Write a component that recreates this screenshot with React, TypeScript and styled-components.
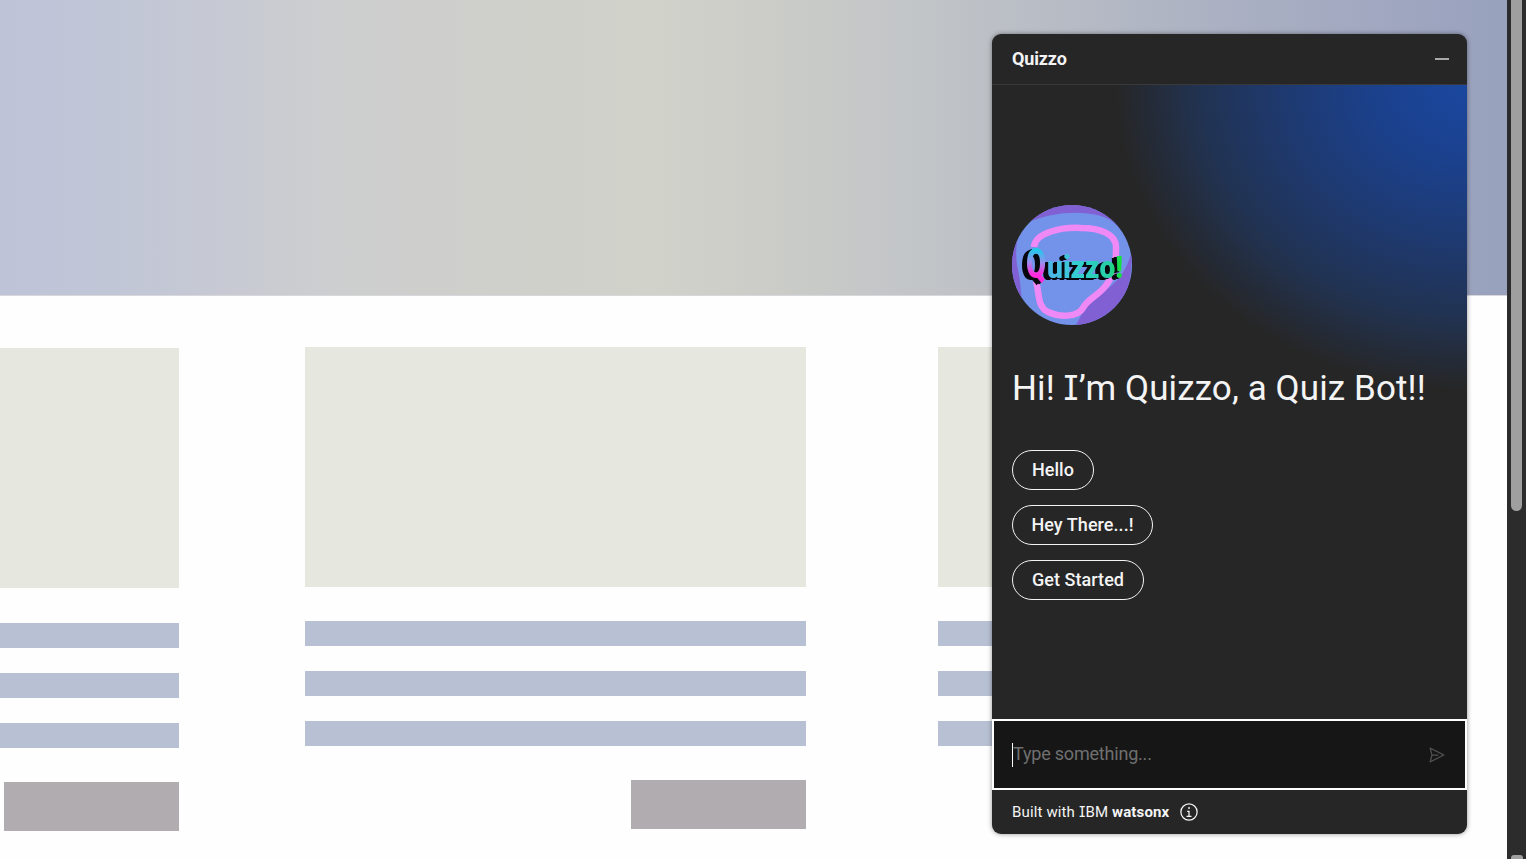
import React from "react";
import styled, { createGlobalStyle } from "styled-components";

const GlobalStyle = createGlobalStyle`
  *, *::before, *::after { box-sizing: border-box; }
  html, body { margin: 0; height: 100%; overflow: hidden; background: #fefefe; }
  body { font-family: Roboto, "Liberation Sans", sans-serif; }
  h1, h2, p { margin: 0; font-weight: 400; }
  button { font: inherit; background: none; border: 0; padding: 0; }
`;

const Shell = styled.div`
  position: relative;
  display: flex;
  width: 1526px;
  height: 859px;
  overflow: hidden;
`;

const Page = styled.main`
  width: 1507px;
  height: 100%;
  overflow: hidden;
`;

const Hero = styled.div`
  height: 296px;
  border-bottom: 1px solid #d8d8dc;
  background: linear-gradient(
    90deg,
    #bec3d8 0,
    #c1c6d7 110px,
    #c7cad3 230px,
    #cdcecf 330px,
    #cfcfcb 500px,
    #d1d2ca 650px,
    #cccdc8 760px,
    #c3c6c8 900px,
    #bcc0c6 992px,
    #a9afc2 1250px,
    #9da4bf 1440px,
    #98a2bd 1507px
  );
`;

const Columns = styled.div`
  display: grid;
  grid-template-columns: 179.4px 500.6px 500px;
  column-gap: 126px;
  padding-top: 50.5px;

  & > :nth-child(3) { margin-left: 6.2px; }
`;

const Column = styled.section<{ $shift?: number }>`
  display: flex;
  flex-direction: column;
  align-items: flex-end;
  padding-top: ${(p) => p.$shift ?? 0}px;
`;

const Picture = styled.div`
  width: 100%;
  height: 240px;
  margin-bottom: 34.5px;
  background: #e6e7de;
`;

const Line = styled.div`
  width: 100%;
  height: 25px;
  margin-bottom: 25px;
  background: #b8c0d4;
`;

const Action = styled.div`
  width: 175.4px;
  height: 49px;
  margin-top: 9px;
  background: #b1acb0;
`;

const Scrollbar = styled.div`
  display: flex;
  flex-direction: column;
  align-items: center;
  justify-content: space-between;
  width: 19px;
  height: 100%;
  background: #2c2c2c;
`;

const Thumb = styled.div`
  width: 11px;
  height: 511px;
  border-radius: 0 0 6px 6px;
  background: #9f9f9f;
`;

const ScrollArrow = styled.div`
  width: 12px;
  height: 4px;
  border-radius: 3px 3px 0 0;
  background: #9f9f9f;
`;

const ChatPanel = styled.aside`
  position: absolute;
  top: 34px;
  left: 992px;
  display: flex;
  flex-direction: column;
  width: 475px;
  height: 800px;
  border-radius: 9px;
  background: #262626;
  color: #f4f4f4;
  box-shadow: 0 0 5px rgba(0, 0, 0, 0.42);
`;

const Header = styled.header`
  display: flex;
  align-items: center;
  justify-content: space-between;
  height: 51px;
  padding: 0 18px 0 20px;
  border-bottom: 1px solid #393939;
`;

const Title = styled.h2`
  padding-bottom: 2px;
  font-size: 18px;
  font-weight: 700;
  letter-spacing: -0.15px;
`;

const Minimize = styled.button`
  width: 14px;
  height: 2px;
  background: #a8a8a8;
`;

const Welcome = styled.div`
  display: flex;
  flex-direction: column;
  height: 634px;
  padding: 120px 20px 0;
  background: radial-gradient(
    ellipse 352px 305px at 100% 0,
    #1a479f 0%,
    #1b418d 25%,
    #1e3a72 50%,
    #213353 75%,
    #262626 100%
  );
`;

const Avatar = styled.svg`
  width: 120px;
  height: 120px;
  flex: none;
`;

const Wordmark = styled.g`
  font-family: Roboto, sans-serif;
  font-weight: 900;
  filter: drop-shadow(-2px 1px 0 #06080d) drop-shadow(-3px 1px 0 #06080d);
`;

const Greeting = styled.h1`
  margin-top: 40px;
  font-size: 35px;
  line-height: 46px;
  letter-spacing: 0.1px;
  white-space: nowrap;
`;

const SlabI = styled.span<{ $size: string }>`
  font-family: Inter, Roboto, sans-serif;
  font-size: ${(p) => p.$size};
  font-feature-settings: "cv08" 1;
`;

const Choices = styled.div`
  display: flex;
  flex-direction: column;
  align-items: flex-start;
  gap: 15px;
  margin-top: 38px;
`;

const Choice = styled.button<{ $width: number }>`
  width: ${(p) => p.$width}px;
  height: 40px;
  padding-bottom: 2px;
  border: 1px solid #f4f4f4;
  border-radius: 20px;
  color: #f4f4f4;
  font-size: 18px;
  font-weight: 500;
  letter-spacing: 0.05px;
  white-space: nowrap;
`;

const Composer = styled.div`
  display: flex;
  align-items: center;
  justify-content: space-between;
  height: 71px;
  padding: 0 18px 0 18px;
  border: 2px solid #ffffff;
  background: #161616;
`;

const Placeholder = styled.div`
  height: 24px;
  border-left: 1px solid #ffffff;
  color: #6f6f6f;
  font-size: 18px;
  line-height: 22px;
  letter-spacing: -0.2px;
`;

const Footer = styled.footer`
  display: flex;
  align-items: center;
  gap: 9px;
  height: 44px;
  padding: 0 20px;
  font-size: 15px;
  white-space: nowrap;
`;

const Brand = styled.p`
  width: 158px;
  letter-spacing: 0.14px;
`;

const Lines = () => (
  <>
    <Line />
    <Line />
    <Line />
  </>
);

const QuizzoAvatar = () => (
  <Avatar viewBox="0 0 120 120" aria-label="Quizzo">
    <defs>
      <clipPath id="avatar-circle">
        <circle cx="60" cy="60" r="60" />
      </clipPath>
      <linearGradient id="word-fill" x1="35" x2="112" y1="60" y2="60" gradientUnits="userSpaceOnUse">
        <stop offset="0" stopColor="#4fb4ea" />
        <stop offset="0.4" stopColor="#33cfd0" />
        <stop offset="0.8" stopColor="#25cfa5" />
        <stop offset="1" stopColor="#12e620" />
      </linearGradient>
      <linearGradient id="q-fill" x1="24" x2="22" y1="44" y2="74" gradientUnits="userSpaceOnUse">
        <stop offset="0" stopColor="#18cdea" />
        <stop offset="0.45" stopColor="#9c8df0" />
        <stop offset="0.85" stopColor="#ff2bdc" />
      </linearGradient>
    </defs>
    <g clipPath="url(#avatar-circle)">
      <rect width="120" height="120" fill="#7393ea" />
      <path d="M0 0H120V35C114 30 111 26 102 18C88 5 45 4 15 18C4 28 3 45 5 60C9 76 9 90 11 110L0 120Z" fill="#8060d2" />
      <path d="M121 42C114 71 101 81 87 89C73 98 70 110 64 120H95C110 102 114 90 118 74Z" fill="#8060d2" />
      <path
        d="M22 42C23 27 51 22 69 23C88 23 104 29 104 42C104 58 103 68 95 79C88 90 75 94 71 103C65 113 47 112 36 107C25 101 28 91 24 76"
        fill="none"
        stroke="#ee89f5"
        strokeWidth="6.5"
        strokeLinejoin="round"
      />
      <Wordmark>
        <text x="14" y="73" fontSize="42" textLength="20" lengthAdjust="spacingAndGlyphs" fill="url(#q-fill)">Q</text>
        <text x="35" y="73" fontSize="32" textLength="76" lengthAdjust="spacingAndGlyphs" fill="url(#word-fill)">uizzo!</text>
      </Wordmark>
    </g>
  </Avatar>
);

const SendIcon = () => (
  <svg width="20" height="20" viewBox="0 0 32 32" fill="#525252">
    <path d="M27.45,15.11l-22-11a1,1,0,0,0-1.08.12,1,1,0,0,0-.33,1L7,16,4,26.74A1,1,0,0,0,5,28a1,1,0,0,0,.45-.11l22-11a1,1,0,0,0,0-1.78Zm-20.9,10L8.76,17H18V15H8.76L6.55,6.89,24.76,16Z" />
  </svg>
);

const InfoIcon = () => (
  <svg width="20" height="20" viewBox="0 0 32 32" fill="#f4f4f4">
    <path d="M17 22V14H13v2h2v6H12v2h8V22ZM16 8a1.5 1.5 0 1 0 1.5 1.5A1.5 1.5 0 0 0 16 8Z" />
    <path d="M16 30A14 14 0 1 1 30 16 14 14 0 0 1 16 30ZM16 4A12 12 0 1 0 28 16 12 12 0 0 0 16 4Z" />
  </svg>
);

export default function App() {
  return (
    <>
      <GlobalStyle />
      <Shell>
        <Page>
          <Hero />
          <Columns>
            <Column $shift={1.6}>
              <Picture />
              <Lines />
              <Action />
            </Column>
            <Column>
              <Picture />
              <Lines />
              <Action />
            </Column>
            <Column>
              <Picture />
              <Lines />
              <Action />
            </Column>
          </Columns>
        </Page>
        <Scrollbar>
          <Thumb />
          <ScrollArrow />
        </Scrollbar>
        <ChatPanel>
          <Header>
            <Title>Quizzo</Title>
            <Minimize aria-label="Minimize" />
          </Header>
          <Welcome>
            <QuizzoAvatar />
            <Greeting>
              Hi! <SlabI $size="34px">I</SlabI>’m Quizzo, a Quiz Bot!!
            </Greeting>
            <Choices>
              <Choice $width={82}>Hello</Choice>
              <Choice $width={141}>Hey There...!</Choice>
              <Choice $width={132}>Get Started</Choice>
            </Choices>
          </Welcome>
          <Composer>
            <Placeholder>Type something...</Placeholder>
            <SendIcon />
          </Composer>
          <Footer>
            <Brand>
              Built with <SlabI $size="14.5px">I</SlabI>BM <b>watsonx</b>
            </Brand>
            <InfoIcon />
          </Footer>
        </ChatPanel>
      </Shell>
    </>
  );
}
